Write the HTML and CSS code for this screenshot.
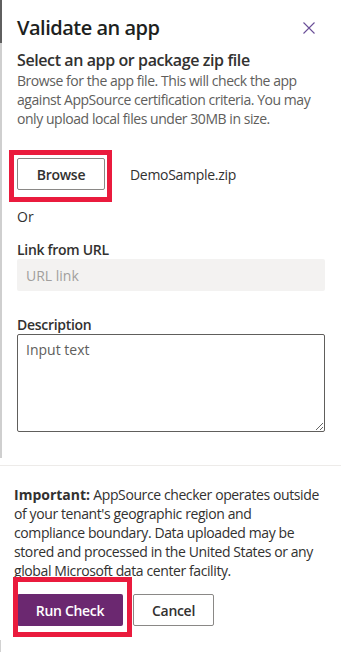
FILE: index.html
```html
<!DOCTYPE html>
<html lang="en">
<head>
    <meta charset="UTF-8">
    <meta name="viewport" content="width=device-width, initial-scale=1.0">
    <title>Validate an app</title>
    <link rel="stylesheet" href="styles.css">
</head>
<body>

    <div class="panel">
        <div class="panel-header">
            <h1 class="panel-title">Validate an app</h1>
            <button class="close-btn" aria-label="Close">
                <svg width="12" height="12" viewBox="0 0 12 12">
                    <path d="M0.5 0.5 L11.5 11.5 M11.5 0.5 L0.5 11.5" stroke="#6a4f98" stroke-width="1.1" fill="none"/>
                </svg>
            </button>
        </div>

        <div class="panel-body">
            <h2 class="section-title">Select an app or package zip file</h2>
            <p class="section-text">Browse for the app file. This will check the app against AppSource certification criteria. You may only upload local files under 30MB in size.</p>

            <div class="file-row">
                <div class="marked">
                    <button class="btn btn-default">Browse</button>
                    <span class="mark mark-browse"></span>
                </div>
                <span class="file-name">DemoSample.zip</span>
            </div>

            <div class="or-text">Or</div>

            <label class="field-label" for="url">Link from URL</label>
            <input class="text-input" id="url" type="text" placeholder="URL link" disabled>

            <label class="field-label label-desc" for="desc">Description</label>
            <textarea class="text-area" id="desc" placeholder="Input text"></textarea>
        </div>

        <div class="panel-footer">
            <p class="notice"><strong class="notice-lead">Important:</strong> AppSource checker operates outside of your tenant's geographic region and<br>compliance boundary. Data uploaded may be stored and processed in the United States or any global Microsoft data center facility.</p>
            <div class="footer-buttons">
                <div class="marked">
                    <button class="btn btn-primary">Run Check</button>
                    <span class="mark mark-run"></span>
                </div>
                <button class="btn btn-default btn-cancel">Cancel</button>
            </div>
        </div>
        <div class="edge-mark"></div>
    </div>

</body>
</html>
```

FILE: styles.css
```css
body {
    margin: 0;
    font-family: 'Open Sans', 'Noto Sans', sans-serif;
    font-size: 14px;
    color: #323130;
    background: #fff;
}
.panel {
    position: relative;
    width: 341px;
    height: 652px;
    display: flex;
    flex-direction: column;
    overflow: hidden;
}
.panel-header {
    height: 43px;
    border-left: 2px solid #5f5f5f;
    padding: 0 26px 0 15px;
    display: flex;
    justify-content: space-between;
    align-items: flex-start;
    box-sizing: border-box;
}
.panel-title {
    margin: 14px 0 0;
    font-size: 20px;
    font-weight: 600;
    line-height: 28px;
    letter-spacing: -0.5px;
    color: #201f1e;
}
.close-btn {
    border: none;
    background: none;
    padding: 0;
    width: 12px;
    height: 12px;
    margin-top: 22px;
    display: flex;
}
.panel-body {
    border-left: 2px solid #cfcfcf;
    padding: 6px 16px 26px 15px;
}
.section-title {
    margin: 0;
    font-size: 16px;
    font-weight: 600;
    line-height: 22px;
    letter-spacing: -0.4px;
}
.section-text {
    margin: 0;
    color: #605e5c;
    line-height: 19px;
    letter-spacing: -0.45px;
}
.file-row {
    margin-top: 30px;
    display: flex;
    align-items: center;
    gap: 25px;
}
.marked {
    position: relative;
    display: inline-flex;
}
.mark {
    position: absolute;
    border: 5px solid #ea1b3d;
    pointer-events: none;
}
.mark-browse {
    left: -8px;
    top: -8px;
    right: -7px;
    bottom: -12px;
}
.mark-run {
    left: -4px;
    top: -17px;
    right: -9px;
    bottom: -11px;
}
.btn {
    height: 32px;
    padding: 0 16px;
    border-radius: 2px;
    font-family: inherit;
    font-size: 14px;
    font-weight: 600;
    letter-spacing: -0.3px;
    white-space: nowrap;
    cursor: pointer;
    box-sizing: border-box;
}
.btn-default {
    min-width: 88px;
    background: #fff;
    color: #323130;
    border: 1px solid #8a8886;
}
.btn-primary {
    width: 106px;
    background: #6b2870;
    color: #fff;
    border: none;
}
.btn-cancel {
    min-width: 81px;
}
.file-name {
    letter-spacing: -0.3px;
}
.or-text {
    margin-top: 17px;
    line-height: 19px;
}
.field-label {
    display: block;
    margin-top: 14px;
    font-weight: 600;
    line-height: 19px;
    letter-spacing: -0.3px;
}
.label-desc {
    margin-top: 24px;
}
.text-input {
    display: block;
    width: 100%;
    height: 32px;
    box-sizing: border-box;
    border: none;
    border-radius: 2px;
    background: #f3f2f1;
    padding: 0 9px;
    font-family: inherit;
    font-size: 14px;
}
.text-input::placeholder {
    color: #a19f9d;
}
.text-area {
    display: block;
    width: 100%;
    height: 98px;
    box-sizing: border-box;
    border: 1px solid #605e5c;
    border-radius: 2px;
    padding: 5px 8px;
    font-family: inherit;
    font-size: 14px;
    line-height: 19px;
    margin: 0;
}
.text-area::placeholder {
    color: #605e5c;
}
.panel-footer {
    margin-top: 7px;
    border-top: 1px solid #edebe9;
    padding: 19px 14px 0;
}
.notice {
    margin: 0;
    line-height: 19px;
    letter-spacing: -0.4px;
}
.notice-lead {
    letter-spacing: 0;
}
.footer-buttons {
    margin-top: 14px;
    padding-left: 3px;
    display: flex;
    gap: 10px;
}
.edge-mark {
    position: absolute;
    left: 0;
    bottom: 0;
    width: 1px;
    height: 12px;
    background: #d2d2d2;
}
```
